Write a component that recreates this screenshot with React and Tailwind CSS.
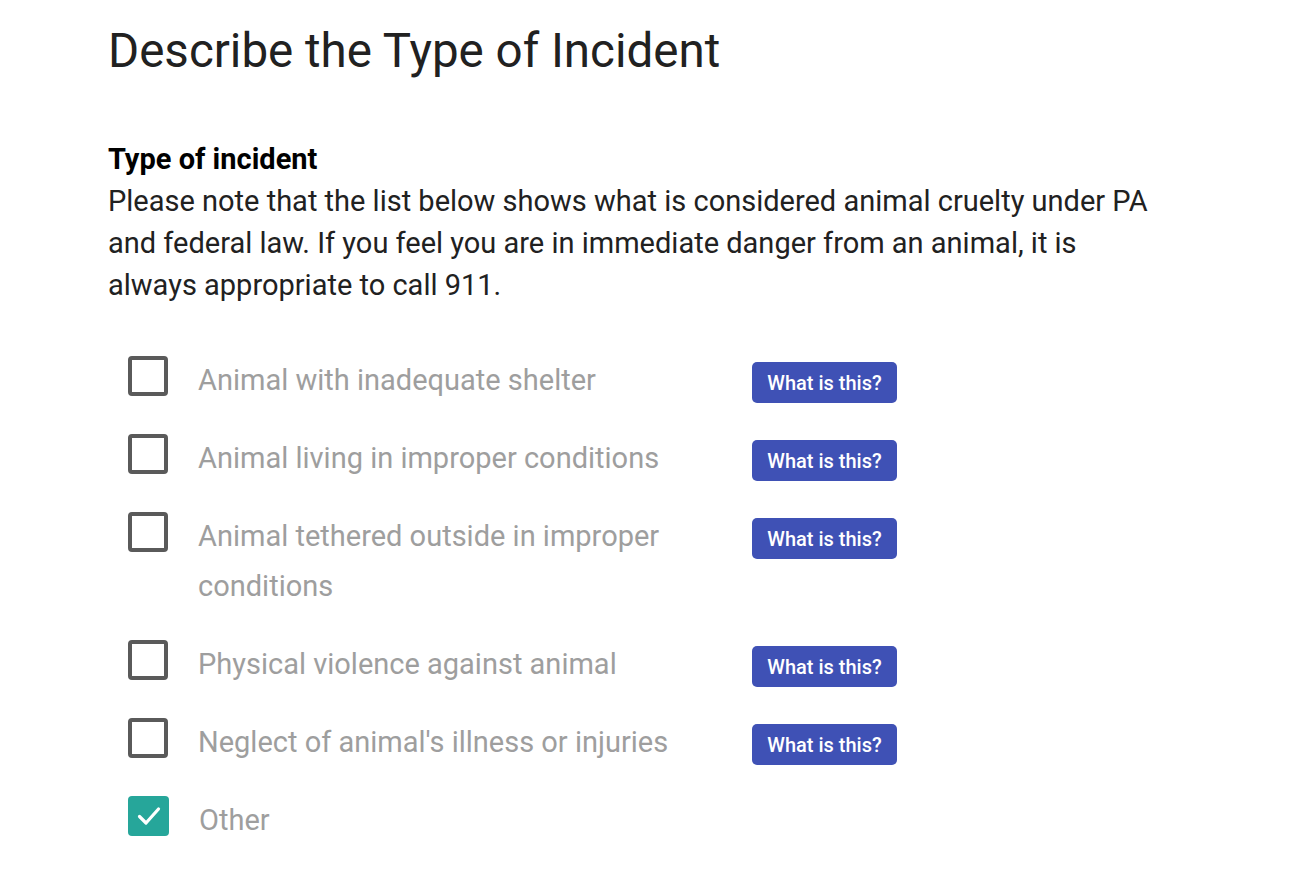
const options = [
  { label: "Animal with inadequate shelter", help: true },
  { label: "Animal living in improper conditions", help: true },
  { label: "Animal tethered outside in improper conditions", help: true },
  { label: "Physical violence against animal", help: true },
  { label: "Neglect of animal's illness or injuries", help: true },
  { label: "Other", help: false, checked: true },
];

function Checkbox({ checked }) {
  if (checked) {
    return (
      <div className="w-[41px] h-[40px] rounded-[4px] bg-[#26a69a] flex items-center justify-center shrink-0">
        <svg width="24" height="20" viewBox="0 0 24 20" fill="none">
          <path d="M2.5 10.5 L9 17 L21.5 3" stroke="white" strokeWidth="3.2" strokeLinecap="round" strokeLinejoin="round" />
        </svg>
      </div>
    );
  }
  return <div className="w-[40px] h-[40px] rounded-[4px] border-[4px] border-[#5a5a5a] shrink-0" />;
}

export default function App() {
  return (
    <div className="min-h-screen bg-white font-['Roboto',sans-serif] pl-[108px] pt-[21px]">
      <h1 className="text-[47.5px] leading-[60px] text-[#212121]">Describe the Type of Incident</h1>

      <div className="mt-[57px] w-[1050px]">
        <p className="text-[29px] leading-[42px] font-bold text-black">Type of incident</p>
        <p className="text-[29px] leading-[42px] text-[#212121]">
          Please note that the list below shows what is considered animal cruelty under PA and federal law. If you
          feel you are in immediate danger from an animal, it is always appropriate to call 911.
        </p>
      </div>

      <div className="mt-[49px] pl-[20px] flex flex-col gap-[28px]">
        {options.map((opt) => (
          <div key={opt.label} className="flex items-start">
            <div className="mt-[1px]">
              <Checkbox checked={opt.checked} />
            </div>
            <p className="ml-[30px] w-[524px] text-[29px] leading-[50px] text-[#9e9e9e]">{opt.label}</p>
            {opt.help && (
              <button className="ml-[30px] mt-[7px] w-[145px] h-[41px] rounded-[5px] bg-[#3f51b5] text-white text-[20px] font-medium">
                What is this?
              </button>
            )}
          </div>
        ))}
      </div>
    </div>
  );
}
